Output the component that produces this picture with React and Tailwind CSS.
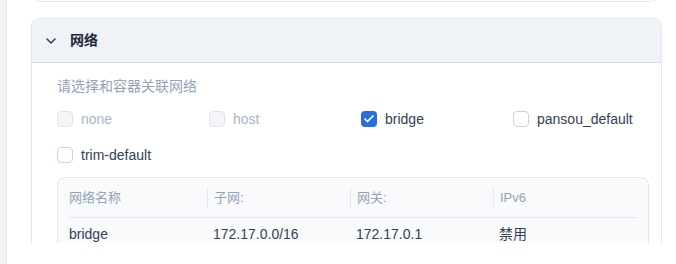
import { Check } from 'lucide-react'

const font = { fontFamily: '"Liberation Sans", "Noto Sans CJK SC", sans-serif' }

const networks = [
  { name: 'none', disabled: true },
  { name: 'host', disabled: true },
  { name: 'bridge', checked: true },
  { name: 'pansou_default' },
  { name: 'trim-default' },
]

function Box({ checked, disabled }) {
  if (checked) {
    return (
      <span className="w-4 h-4 rounded-[4px] bg-[#2470dc] flex items-center justify-center shrink-0">
        <Check className="w-3 h-3 text-white" strokeWidth={3.5} />
      </span>
    )
  }
  return (
    <span
      className={
        disabled
          ? 'w-4 h-4 rounded-[4px] border border-[#dfe4ec] bg-[#f4f5f7] shrink-0'
          : 'w-4 h-4 rounded-[4px] border border-[#c9d2de] bg-white shrink-0'
      }
    />
  )
}

export default function App() {
  return (
    <div className="w-[676px] h-[264px] flex bg-white overflow-hidden" style={font}>
      <div className="w-[7px] h-full bg-[#f3f3f4] border-r border-[#e4e4e7]" />
      <div className="flex-1">
        <div className="h-[243px] overflow-hidden pl-[24px]">
          <div className="-mt-[10px] ml-[2px] w-[625px] h-[12px] border-x border-b border-[#e5e9f0] rounded-b-[8px]" />

          <div className="mt-[16px] w-[631px] border border-[#e2e8f0] rounded-[8px]">
            <div className="h-[44px] bg-[#eff3f8] border-b border-[#d3dbe6] rounded-t-[8px] flex items-center pl-[14px] gap-[14px]">
              <svg width="10" height="6" viewBox="0 0 10 6" fill="none">
                <path d="M1 1l4 4 4-4" stroke="#334155" strokeWidth="1.6" strokeLinecap="round" strokeLinejoin="round" />
              </svg>
              <span className="text-[14px] font-bold text-[#1e293b]">网络</span>
            </div>

            <div className="pl-[25px] pt-[13px]">
              <p className="text-[14px] leading-[20px] text-[#94a3b8]">请选择和容器关联网络</p>

              <div className="mt-[5px] grid grid-cols-[repeat(4,152px)]">
                {networks.map((n) => (
                  <label key={n.name} className="h-[36px] flex items-center gap-[8px]">
                    <Box checked={n.checked} disabled={n.disabled} />
                    <span className={n.disabled ? 'text-[14px] text-[#a8b5c7]' : 'text-[14px] text-[#334155]'}>
                      {n.name}
                    </span>
                  </label>
                ))}
              </div>

              <div className="mt-[4px] w-[592px] bg-[#f8fafc] border border-[#e2e8f0] rounded-[8px] px-[11px]">
                <div className="h-[40px] grid grid-cols-[138px_143px_143px_1fr] items-center border-b border-[#e2e8f0] text-[13px] text-[#94a3b8]">
                  <div>网络名称</div>
                  <div className="border-l border-[#e2e8f0] pl-[6px] leading-[22px]">子网:</div>
                  <div className="border-l border-[#e2e8f0] pl-[6px] leading-[22px]">网关:</div>
                  <div className="border-l border-[#e2e8f0] pl-[6px] leading-[22px]">IPv6</div>
                </div>
                <div className="h-[32px] grid grid-cols-[138px_143px_143px_1fr] items-center text-[14px] text-[#334155]">
                  <div>bridge</div>
                  <div className="pl-[6px]">172.17.0.0/16</div>
                  <div className="pl-[6px]">172.17.0.1</div>
                  <div className="pl-[6px]">禁用</div>
                </div>
              </div>
            </div>
          </div>
        </div>
      </div>
    </div>
  )
}
